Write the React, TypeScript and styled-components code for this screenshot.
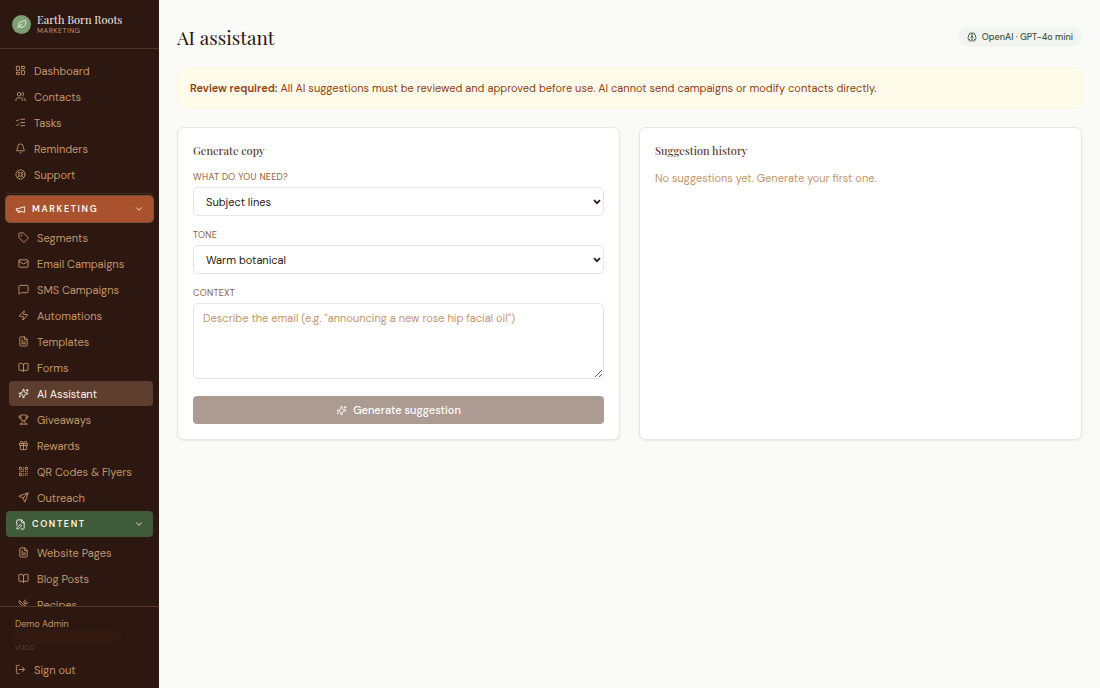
import React from "react";
import styled, { createGlobalStyle, css } from "styled-components";
import {
  BookOpen,
  Bell,
  Brain,
  ChevronDown,
  FilePen,
  FileText,
  Gift,
  LayoutDashboard,
  Leaf,
  LifeBuoy,
  ListChecks,
  LogOut,
  Mail,
  MessageSquare,
  QrCode,
  Send,
  Tag,
  Trophy,
  Users,
  UtensilsCrossed,
  Zap,
} from "lucide-react";

const sans = `"DM Sans", Inter, "Liberation Sans", sans-serif`;
const serif = `"Playfair Display", "Liberation Serif", serif`;

const GlobalStyle = createGlobalStyle`
  *, *::before, *::after { box-sizing: border-box; }
  body {
    margin: 0;
    background: #fafaf8;
    color: #2c1810;
    font-family: ${sans};
    font-size: 11px;
    line-height: 16px;
  }
  button, select, textarea { font: inherit; }
  h1, h2, p { margin: 0; }
`;

const Shell = styled.div`
  display: flex;
  height: 100vh;
`;

const Sidebar = styled.aside`
  flex: 0 0 159px;
  display: flex;
  flex-direction: column;
  background: #2c1810;
  color: #c4956a;
`;

const Brand = styled.div`
  display: flex;
  align-items: center;
  gap: 6px;
  height: 49px;
  padding: 0 12px;
  border-bottom: 1px solid #4d3529;
`;

const BrandMark = styled.span`
  display: grid;
  place-items: center;
  width: 19px;
  height: 19px;
  border-radius: 50%;
  background: #7d9f72;
  color: #f4f7f2;
`;

const BrandName = styled.div`
  font-family: ${serif};
  font-size: 11px;
  font-weight: 400;
  line-height: 13px;
  color: #f7ede2;
`;

const BrandTag = styled.div`
  font-size: 7px;
  line-height: 9px;
  letter-spacing: 0.08em;
  text-transform: uppercase;
`;

const Nav = styled.nav`
  flex: 1;
  min-height: 0;
  overflow: hidden auto;
  scrollbar-width: none;
  padding: 9px 6px 0;
`;

const NavList = styled.ul<{ $nested?: boolean }>`
  display: grid;
  gap: 1px;
  margin: 0;
  padding: ${(p) => (p.$nested ? "3px 0 1px 3px" : "0 0 6px")};
  list-style: none;
`;

const rowStyle = css`
  display: flex;
  align-items: center;
  gap: 8px;
  height: 25px;
  padding: 0 9px;
  border-radius: 4px;
`;

const NavLink = styled.a<{ $active?: boolean }>`
  ${rowStyle}
  color: ${(p) => (p.$active ? "#fdf6ee" : "#c4956a")};
  background: ${(p) => (p.$active ? "#5c3d2e" : "transparent")};
  text-decoration: none;
  white-space: nowrap;
`;

const Divider = styled.hr`
  margin: 0 0 2px;
  border: 0;
  border-top: 1px solid #432c21;
`;

const GroupButton = styled.button<{ $tone: "clay" | "forest" }>`
  display: flex;
  align-items: center;
  gap: 6px;
  width: 100%;
  height: 26px;
  padding: 0 9px;
  border: 0;
  border-radius: 4px;
  background: ${(p) => (p.$tone === "clay" ? "#a9522d" : "#3f5b39")};
  box-shadow: ${(p) => (p.$tone === "clay" ? "0 0 0 1px #74503f" : "none")};
  color: #fdf6ee;
  font-size: 9px;
  font-weight: 600;
  letter-spacing: 0.18em;
  text-transform: uppercase;

  & > span {
    flex: 1;
    text-align: left;
  }
`;

const Account = styled.div`
  padding: 10px 6px 6px;
  border-top: 1px solid #563a25;
`;

const AccountName = styled.div`
  padding: 0 9px;
  font-size: 9px;
  line-height: 15px;
`;

const HiddenEmail = styled.div`
  width: 104px;
  height: 9px;
  margin: 0 9px 2px;
  border-radius: 4px;
  background: #371b12;
  filter: blur(3px);
`;

const Version = styled.div`
  padding: 0 9px;
  font-size: 7px;
  line-height: 9px;
  color: #63493b;
`;

const SignOut = styled.button`
  ${rowStyle}
  width: 100%;
  margin-top: 5px;
  border: 0;
  background: transparent;
  color: #c4956a;
`;

const Main = styled.main`
  flex: 1;
  min-width: 0;
  overflow: auto;
  display: flex;
  flex-direction: column;
  gap: 18px;
  padding: 18px;
`;

const PageHeader = styled.header`
  display: flex;
  align-items: center;
  justify-content: space-between;
  height: 38px;
  margin-bottom: -7px;
`;

const PageTitle = styled.h1`
  font-family: ${serif};
  font-size: 19px;
  font-weight: 400;
  line-height: 28px;
`;

const ModelBadge = styled.span`
  display: inline-flex;
  align-items: center;
  gap: 5px;
  height: 20px;
  padding: 0 9px;
  border-radius: 10px;
  background: #f1f4f0;
  color: #3f5239;
  font-size: 9px;
  font-weight: 500;
`;

const Notice = styled.p`
  padding: 12px;
  border: 1px solid #fdf6dc;
  border-radius: 7px;
  background: #fffbeb;
  color: #92400e;

  & > strong {
    font-weight: 600;
  }
`;

const Columns = styled.div`
  display: grid;
  grid-template-columns: 1fr 1fr;
  gap: 19px;
`;

const Card = styled.section`
  padding: 15px;
  border: 1px solid #e8e6e2;
  border-radius: 7px;
  background: #fff;
  box-shadow: 0 1px 2px rgba(44, 24, 16, 0.08);
`;

const CardTitle = styled.h2`
  margin-bottom: 12px;
  font-family: ${serif};
  font-size: 11px;
  font-weight: 500;
  line-height: 15px;
  color: #5c3d2e;
`;

const Field = styled.div`
  display: grid;
  gap: 2px;
  margin-bottom: 12px;
`;

const FieldLabel = styled.label`
  font-size: 9px;
  line-height: 15px;
  letter-spacing: 0.03em;
  text-transform: uppercase;
  color: #8b5e3c;
`;

const controlStyle = css`
  width: 100%;
  border: 1px solid #e7e4e1;
  border-radius: 5px;
  background: #fff;
  color: #2c1810;
`;

const SelectBox = styled.div`
  position: relative;

  & > svg {
    position: absolute;
    top: 12px;
    right: 3px;
    pointer-events: none;
  }
`;

const NativeSelect = styled.select`
  ${controlStyle}
  display: block;
  height: 29px;
  padding: 0 16px 0 12px;
  appearance: none;
`;

const TextArea = styled.textarea`
  ${controlStyle}
  display: block;
  height: 76px;
  padding: 6px 9px;
  resize: vertical;

  &::placeholder {
    color: #c4956a;
    opacity: 1;
  }
`;

const SubmitButton = styled.button`
  display: flex;
  align-items: center;
  justify-content: center;
  gap: 6px;
  width: 100%;
  height: 28px;
  margin-top: 17px;
  border: 0;
  border-radius: 4px;
  background: #ab9b92;
  color: #fff;
  font-weight: 500;
`;

const EmptyText = styled.p`
  color: #c4956a;
`;

type IconProps = { size: number };

function OutlineIcon({ size, children }: IconProps & { children: React.ReactNode }) {
  return (
    <svg
      width={size}
      height={size}
      viewBox="0 0 24 24"
      fill="none"
      stroke="currentColor"
      strokeWidth="2"
      strokeLinecap="round"
      strokeLinejoin="round"
      aria-hidden="true"
    >
      {children}
    </svg>
  );
}

function MegaphoneIcon({ size }: IconProps) {
  return (
    <OutlineIcon size={size}>
      <path d="m3 11 18-5v12L3 14v-3z" />
      <path d="M11.6 16.8a3 3 0 1 1-5.8-1.6" />
    </OutlineIcon>
  );
}

function SparklesIcon({ size }: IconProps) {
  return (
    <OutlineIcon size={size}>
      <path d="M9.937 15.5A2 2 0 0 0 8.5 14.063l-6.135-1.582a.5.5 0 0 1 0-.962L8.5 9.936A2 2 0 0 0 9.937 8.5l1.582-6.135a.5.5 0 0 1 .963 0L14.063 8.5A2 2 0 0 0 15.5 9.937l6.135 1.581a.5.5 0 0 1 0 .964L15.5 14.063a2 2 0 0 0-1.437 1.437l-1.582 6.135a.5.5 0 0 1-.963 0z" />
      <path d="M20 3v4" />
      <path d="M22 5h-4" />
      <path d="M4 17v2" />
      <path d="M5 18H3" />
    </OutlineIcon>
  );
}

function Select({ id, value }: { id: string; value: string }) {
  return (
    <SelectBox>
      <NativeSelect id={id}>
        <option>{value}</option>
      </NativeSelect>
      <svg width="8" height="6" viewBox="0 0 8 6" fill="none" stroke="#2c1810" strokeWidth="1.7" aria-hidden="true">
        <path d="M1 1.2 4 4.2 7 1.2" />
      </svg>
    </SelectBox>
  );
}

type Item = { label: string; icon: React.ComponentType<IconProps>; active?: boolean };

const general: Item[] = [
  { label: "Dashboard", icon: LayoutDashboard },
  { label: "Contacts", icon: Users },
  { label: "Tasks", icon: ListChecks },
  { label: "Reminders", icon: Bell },
  { label: "Support", icon: LifeBuoy },
];

const marketing: Item[] = [
  { label: "Segments", icon: Tag },
  { label: "Email Campaigns", icon: Mail },
  { label: "SMS Campaigns", icon: MessageSquare },
  { label: "Automations", icon: Zap },
  { label: "Templates", icon: FileText },
  { label: "Forms", icon: BookOpen },
  { label: "AI Assistant", icon: SparklesIcon, active: true },
  { label: "Giveaways", icon: Trophy },
  { label: "Rewards", icon: Gift },
  { label: "QR Codes & Flyers", icon: QrCode },
  { label: "Outreach", icon: Send },
];

const content: Item[] = [
  { label: "Website Pages", icon: FileText },
  { label: "Blog Posts", icon: BookOpen },
  { label: "Recipes", icon: UtensilsCrossed },
];

function NavItems({ items, nested }: { items: Item[]; nested?: boolean }) {
  return (
    <NavList $nested={nested}>
      {items.map(({ label, icon: Icon, active }) => (
        <li key={label}>
          <NavLink href="#" $active={active} aria-current={active ? "page" : undefined}>
            <Icon size={11} />
            {label}
          </NavLink>
        </li>
      ))}
    </NavList>
  );
}

export default function App() {
  return (
    <>
      <GlobalStyle />
      <Shell>
        <Sidebar>
          <Brand>
            <BrandMark>
              <Leaf size={10} />
            </BrandMark>
            <div>
              <BrandName>Earth Born Roots</BrandName>
              <BrandTag>Marketing</BrandTag>
            </div>
          </Brand>
          <Nav>
            <NavItems items={general} />
            <Divider />
            <GroupButton type="button" $tone="clay" aria-expanded="true">
              <MegaphoneIcon size={11} />
              <span>Marketing</span>
              <ChevronDown size={10} />
            </GroupButton>
            <NavItems items={marketing} nested />
            <GroupButton type="button" $tone="forest" aria-expanded="true">
              <FilePen size={11} />
              <span>Content</span>
              <ChevronDown size={10} />
            </GroupButton>
            <NavItems items={content} nested />
          </Nav>
          <Account>
            <AccountName>Demo Admin</AccountName>
            <HiddenEmail />
            <Version>v1.10.0</Version>
            <SignOut type="button">
              <LogOut size={11} />
              Sign out
            </SignOut>
          </Account>
        </Sidebar>
        <Main>
          <PageHeader>
            <PageTitle>AI assistant</PageTitle>
            <ModelBadge>
              <Brain size={10} />
              OpenAI · GPT-4o mini
            </ModelBadge>
          </PageHeader>
          <Notice>
            <strong>Review required:</strong> All AI suggestions must be reviewed and approved before use. AI
            cannot send campaigns or modify contacts directly.
          </Notice>
          <Columns>
            <Card>
              <CardTitle>Generate copy</CardTitle>
              <Field>
                <FieldLabel htmlFor="need">What do you need?</FieldLabel>
                <Select id="need" value="Subject lines" />
              </Field>
              <Field>
                <FieldLabel htmlFor="tone">Tone</FieldLabel>
                <Select id="tone" value="Warm botanical" />
              </Field>
              <Field>
                <FieldLabel htmlFor="context">Context</FieldLabel>
                <TextArea
                  id="context"
                  placeholder={'Describe the email (e.g. "announcing a new rose hip facial oil")'}
                />
              </Field>
              <SubmitButton type="button" disabled>
                <SparklesIcon size={11} />
                Generate suggestion
              </SubmitButton>
            </Card>
            <Card>
              <CardTitle>Suggestion history</CardTitle>
              <EmptyText>No suggestions yet. Generate your first one.</EmptyText>
            </Card>
          </Columns>
        </Main>
      </Shell>
    </>
  );
}
